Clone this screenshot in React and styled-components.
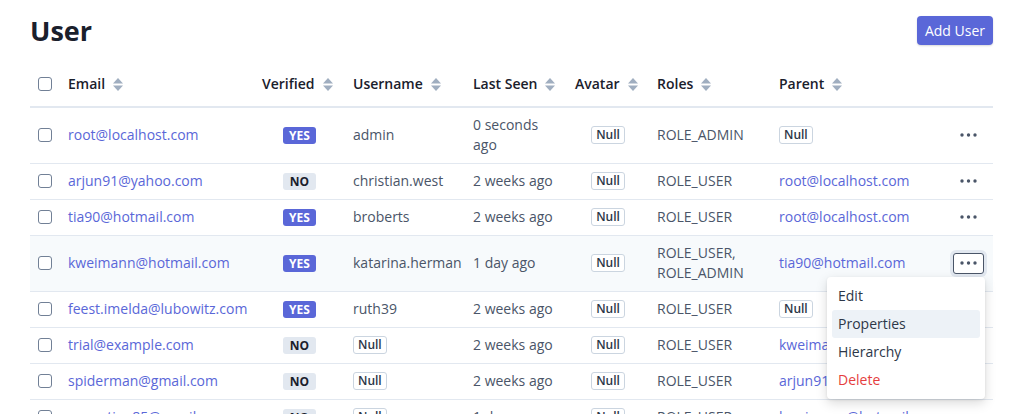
import React from "react";
import styled, { createGlobalStyle } from "styled-components";

const GlobalStyle = createGlobalStyle`
  html, body {
    margin: 0;
    padding: 0;
    background: #ffffff;
    font-family: "Open Sans", "Noto Sans", sans-serif;
    -webkit-font-smoothing: antialiased;
  }
`;

const users = [
  { email: "root@localhost.com", verified: true, username: "admin", seen: "0 seconds ago", roles: ["ROLE_ADMIN"], parent: null, tall: true },
  { email: "arjun91@yahoo.com", verified: false, username: "christian.west", seen: "2 weeks ago", roles: ["ROLE_USER"], parent: "root@localhost.com" },
  { email: "tia90@hotmail.com", verified: true, username: "broberts", seen: "2 weeks ago", roles: ["ROLE_USER"], parent: "root@localhost.com" },
  { email: "kweimann@hotmail.com", verified: true, username: "katarina.herman", seen: "1 day ago", roles: ["ROLE_USER,", "ROLE_ADMIN"], parent: "tia90@hotmail.com", active: true },
  { email: "feest.imelda@lubowitz.com", verified: true, username: "ruth39", seen: "2 weeks ago", roles: ["ROLE_USER"], parent: null },
  { email: "trial@example.com", verified: false, username: null, seen: "2 weeks ago", roles: ["ROLE_USER"], parent: "kweimann@hotmail.com" },
  { email: "spiderman@gmail.com", verified: false, username: null, seen: "2 weeks ago", roles: ["ROLE_USER"], parent: "arjun91@yahoo.com" },
  { email: "augustine85@gmail.com", verified: false, username: null, seen: "1 day ago", roles: ["ROLE_USER"], parent: "kweimann@hotmail.com" },
];

const columns = [
  { label: "Email", width: 194 },
  { label: "Verified", width: 91 },
  { label: "Username", width: 120 },
  { label: "Last Seen", width: 102 },
  { label: "Avatar", width: 82 },
  { label: "Roles", width: 122 },
  { label: "Parent", width: 173 },
];

const SortIcon = () => (
  <SortSvg width="10" height="13" viewBox="0 0 10 13">
    <path d="M5 0 L10 5.5 L0 5.5 Z" fill="#a0aec0" />
    <path d="M0 7.5 L10 7.5 L5 13 Z" fill="#a0aec0" />
  </SortSvg>
);

const Dots = () => (
  <svg width="17" height="4" viewBox="0 0 17 4">
    <circle cx="2" cy="2" r="1.7" fill="#4a5568" />
    <circle cx="8.5" cy="2" r="1.7" fill="#4a5568" />
    <circle cx="15" cy="2" r="1.7" fill="#4a5568" />
  </svg>
);

const App = () => {
  return (
    <Page>
      <GlobalStyle />
      <TopBar>
        <Title>User</Title>
        <AddButton>Add User</AddButton>
      </TopBar>
      <Table>
        <colgroup>
          <col style={{ width: 30 }} />
          {columns.map((c) => (
            <col key={c.label} style={{ width: c.width }} />
          ))}
          <col style={{ width: 49 }} />
        </colgroup>
        <thead>
          <tr>
            <Th><Checkbox /></Th>
            {columns.map((c) => (
              <Th key={c.label}>
                <HeadLabel>{c.label}<SortIcon /></HeadLabel>
              </Th>
            ))}
            <Th />
          </tr>
        </thead>
        <tbody>
          {users.map((u) => (
            <Row key={u.email} $active={u.active}>
              <Td><Checkbox /></Td>
              <Td><Link>{u.email}</Link></Td>
              <Td $center>
                <Flag $yes={u.verified}>{u.verified ? "YES" : "NO"}</Flag>
              </Td>
              <Td>{u.username ? u.username : <NullBadge>Null</NullBadge>}</Td>
              <Td>{u.tall ? <>0 seconds<br />ago</> : u.seen}</Td>
              <Td $center><NullBadge>Null</NullBadge></Td>
              <Td>
                {u.roles.map((r) => (
                  <div key={r}>{r}</div>
                ))}
              </Td>
              <Td>{u.parent ? <Link>{u.parent}</Link> : <NullBadge>Null</NullBadge>}</Td>
              <Td $center>
                <ActionCell>
                  <ActionButton $open={u.active}><Dots /></ActionButton>
                  {u.active && (
                    <Menu>
                      <MenuItem>Edit</MenuItem>
                      <MenuItem $hover>Properties</MenuItem>
                      <MenuItem>Hierarchy</MenuItem>
                      <MenuItem $danger>Delete</MenuItem>
                    </Menu>
                  )}
                </ActionCell>
              </Td>
            </Row>
          ))}
        </tbody>
      </Table>
    </Page>
  );
};

export default App;

const Page = styled.div`
  padding: 16px 16px 0 30px;
  height: 414px;
  box-sizing: border-box;
  overflow: hidden;
`;

const TopBar = styled.div`
  display: flex;
  align-items: center;
  justify-content: space-between;
  height: 29px;
  margin-bottom: 15px;
`;

const Title = styled.h1`
  margin: 0;
  font-size: 27px;
  font-weight: 700;
  color: #1a202c;
  line-height: 29px;
`;

const AddButton = styled.button`
  height: 29px;
  padding: 0 8px;
  border: none;
  border-radius: 4px;
  background: #5a67d8;
  color: #ffffff;
  font-family: inherit;
  font-size: 14px;
  box-shadow: 0 1px 2px rgba(0, 0, 0, 0.15);
`;

const Table = styled.table`
  width: 963px;
  table-layout: fixed;
  border-collapse: collapse;
  font-size: 14px;
  color: #4a5568;
`;

const Th = styled.th`
  padding: 14px 8px 12px;
  line-height: 20px;
  text-align: left;
  font-weight: 600;
  color: #1a202c;
  border-bottom: 2px solid #e2e8f0;
  white-space: nowrap;
`;

const HeadLabel = styled.span`
  display: inline-flex;
  align-items: center;
  gap: 8px;
`;

const SortSvg = styled.svg`
  display: block;
`;

const Row = styled.tr`
  background: ${(p) => (p.$active ? "#f7fafc" : "#ffffff")};
  border-bottom: 1px solid #e2e8f0;
`;

const Td = styled.td`
  height: 20px;
  padding: 7px 8px 8px;
  line-height: 20px;
  vertical-align: middle;
  text-align: ${(p) => (p.$center ? "center" : "left")};
  white-space: nowrap;
`;

const Checkbox = styled.span`
  display: block;
  width: 14px;
  height: 14px;
  border: 1px solid #718096;
  border-radius: 3px;
  box-sizing: border-box;
  background: #ffffff;
`;

const Link = styled.span`
  color: #5a67d8;
`;

const Flag = styled.span`
  display: inline-block;
  width: 33px;
  height: 17px;
  margin-top: 2px;
  line-height: 17px;
  border-radius: 3px;
  font-size: 12px;
  font-weight: 700;
  text-align: center;
  vertical-align: top;
  background: ${(p) => (p.$yes ? "#5a67d8" : "#e2e8f0")};
  color: ${(p) => (p.$yes ? "#ffffff" : "#1a202c")};
`;

const NullBadge = styled.span`
  display: inline-block;
  padding: 0 4px;
  height: 18px;
  margin-top: 1px;
  line-height: 16px;
  box-sizing: border-box;
  border: 1px solid #cbd5e0;
  border-radius: 3px;
  background: #ffffff;
  font-size: 12px;
  font-weight: 600;
  color: #2d3748;
  vertical-align: top;
`;

const ActionCell = styled.div`
  position: relative;
  display: flex;
  align-items: center;
  justify-content: center;
  height: 20px;
`;

const ActionButton = styled.div`
  flex: none;
  display: flex;
  align-items: center;
  justify-content: center;
  width: 31px;
  height: 21px;
  box-sizing: border-box;
  border-radius: 3px;
  border: 1px solid ${(p) => (p.$open ? "#4a5568" : "transparent")};
  background: ${(p) => (p.$open ? "#ffffff" : "transparent")};
  box-shadow: ${(p) => (p.$open ? "0 0 0 3px #e2e8f0" : "none")};
`;

const Menu = styled.div`
  position: absolute;
  top: 24px;
  right: 0;
  width: 158px;
  padding: 5px;
  box-sizing: border-box;
  background: #ffffff;
  border-radius: 4px;
  box-shadow: 0 4px 12px rgba(0, 0, 0, 0.15), 0 1px 3px rgba(0, 0, 0, 0.08);
  text-align: left;
  z-index: 10;
`;

const MenuItem = styled.div`
  height: 28px;
  line-height: 28px;
  padding: 0 6px;
  border-radius: 3px;
  font-size: 14px;
  color: ${(p) => (p.$danger ? "#e53e3e" : "#2d3748")};
  background: ${(p) => (p.$hover ? "#edf2f7" : "transparent")};
`;
